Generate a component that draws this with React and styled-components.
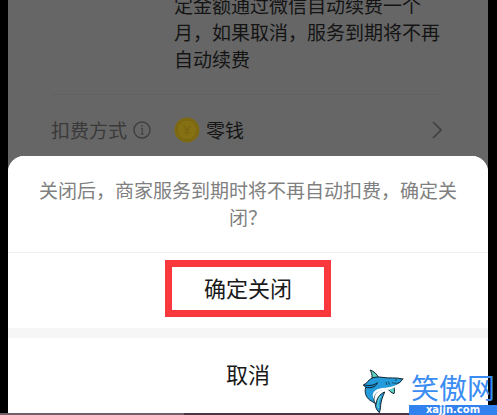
import styled, { createGlobalStyle } from "styled-components";

const GlobalStyle = createGlobalStyle`
  * {
    box-sizing: border-box;
  }
  body {
    margin: 0;
    background: #000;
    font-family: "Noto Sans CJK SC", sans-serif;
  }
  #root {
    min-height: 100vh;
    display: flex;
    flex-direction: column;
  }
`;

const Screen = styled.main`
  flex: 1;
  margin: 0 9px 0 8px;
  display: flex;
  flex-direction: column;
  background: #666;
  overflow: hidden;
`;

const Details = styled.section`
  padding: 0 46px 0 43px;
  font-size: 19px;
  line-height: 27px;
  color: #141414;
`;

const Description = styled.p`
  margin: -9px 0 0;
  padding: 0 0 22px 123px;
  white-space: nowrap;
  border-bottom: 1px solid #616161;
`;

const PaymentRow = styled.div`
  display: flex;
  align-items: center;
  height: 61px;
  padding-top: 8px;
`;

const PaymentLabel = styled.div`
  display: flex;
  align-items: center;
  gap: 6px;
  width: 123px;
  color: #3a3a3a;
`;

const PaymentValue = styled.div`
  display: flex;
  align-items: center;
  gap: 6px;
  flex: 1;
`;

const Sheet = styled.section`
  flex: 1;
  display: flex;
  flex-direction: column;
  background: #f6f6f6;
  border-radius: 16px 16px 0 0;
  overflow: hidden;
`;

const Message = styled.p`
  margin: 0;
  padding: 20px 28px 22px;
  background: #fff;
  border-bottom: 1px solid #f0f0f0;
  font-size: 19px;
  line-height: 27px;
  text-align: center;
  color: #808080;
`;

const SheetAction = styled.button`
  display: flex;
  align-items: center;
  justify-content: center;
  height: 75px;
  padding: 0 0 4px;
  border: none;
  background: #fff;
  color: #1a1a1a;
  font-family: inherit;
  font-size: 22px;
  line-height: 33px;
  cursor: pointer;
`;

const ConfirmAction = styled(SheetAction)`
  margin-bottom: 10px;
`;

const Highlight = styled.span`
  padding: 4px 32px 6px;
  border: 7px solid #f9383d;
`;

const BottomStrip = styled.div`
  height: 2px;
  background: linear-gradient(to right, #705f69 37%, #493645 37%);
`;

const Watermark = styled.a`
  position: absolute;
  right: 0;
  bottom: 0;
  display: flex;
  align-items: flex-end;
  gap: 1px;
  text-decoration: none;
`;

const SiteName = styled.div`
  display: flex;
  flex-direction: column;
  width: 88px;
  color: #3b8cf2;
  font-size: 28px;
  line-height: 36px;
  text-align: center;
`;

const SiteDomain = styled.span`
  background: #3181ee;
  color: #fff;
  font-family: "DejaVu Sans", sans-serif;
  font-size: 10px;
  font-weight: bold;
  line-height: 10px;
`;

const InfoIcon = () => (
  <svg width="18" height="18" viewBox="0 0 18 18" fill="none" stroke="#3f3f3f">
    <circle cx="9" cy="9" r="8" strokeWidth="1.4" />
    <path d="M8 7.5h1.2v5.5M7.6 13h3" strokeWidth="1.1" />
    <circle cx="9" cy="5" r=".4" />
  </svg>
);

const CoinIcon = () => (
  <svg width="26" height="26" viewBox="0 0 26 26" fill="none">
    <circle cx="13" cy="13" r="12.5" fill="#7d6a12" />
    <circle cx="13" cy="13" r="10" fill="#857014" stroke="#78650f" />
    <path
      d="M9.5 8.5 13 12.5l3.5-4M13 12.5V18M10 13h6M10 15.5h6"
      stroke="#7a6611"
      strokeWidth="1.2"
    />
  </svg>
);

const ChevronIcon = () => (
  <svg width="10" height="18" viewBox="0 0 10 18" fill="none">
    <path d="m1 1 8 8-8 8" stroke="#3f3f3f" strokeWidth="1.6" />
  </svg>
);

const SharkLogo = () => (
  <svg
    width="50"
    height="49"
    viewBox="0 0 150 147"
    fill="none"
    stroke="#10222c"
    strokeWidth="3"
    strokeLinejoin="round"
    strokeLinecap="round"
  >
    <path d="M42 34C43 25 40 18 36 12c11 3 21 12 26 23z" fill="#5fd0c4" />
    <path d="M88 66c5 9 12 14 20 17 3-8 2-16-2-23z" fill="#5fd0c4" />
    <path
      d="M134 39C114 33 94 38 72 34 52 30 34 37 26 51L16 57l7 7c-5 18 3 34 18 42 6 3 10 5 13 9 2-18 11-31 26-37-6 15-11 26-12 40-1 8-1 14-4 22-7-7-12-15-12-25 0-8-7-8-3-24 3-13 16-20 35-23 20-2 38-11 50-29z"
      fill="#249cdb"
    />
    <path
      d="M126 50C110 68 92 72 76 73 59 75 48 83 48 99c-8-12-2-24 10-29 20-8 45-3 68-20z"
      fill="#fff"
      stroke="none"
    />
    <path d="M18 57c14 3 29 2 40-7-4 14-21 18-35 14" fill="#1688c8" />
    <path d="M126 49c-7 4-16 4-23 1M91 48l4 7M84 49l3 7" strokeWidth="2" />
    <path d="M68 91c-8 10-10 22-7 34" stroke="#62d5ca" strokeWidth="4" />
    <circle cx="114" cy="42" r="2" fill="#10222c" stroke="none" />
  </svg>
);

export default function App() {
  return (
    <>
      <GlobalStyle />
      <Screen>
        <Details>
          <Description>
            定金额通过微信自动续费一个
            <br />
            月，如果取消，服务到期将不再
            <br />
            自动续费
          </Description>
          <PaymentRow>
            <PaymentLabel>
              扣费方式
              <InfoIcon />
            </PaymentLabel>
            <PaymentValue>
              <CoinIcon />
              零钱
            </PaymentValue>
            <ChevronIcon />
          </PaymentRow>
        </Details>
        <Sheet>
          <Message>关闭后，商家服务到期时将不再自动扣费，确定关闭？</Message>
          <ConfirmAction type="button">
            <Highlight>确定关闭</Highlight>
          </ConfirmAction>
          <SheetAction type="button">取消</SheetAction>
        </Sheet>
      </Screen>
      <BottomStrip />
      <Watermark href="#">
        <SharkLogo />
        <SiteName>
          <span>笑傲网</span>
          <SiteDomain>xajjn.com</SiteDomain>
        </SiteName>
      </Watermark>
    </>
  );
}
